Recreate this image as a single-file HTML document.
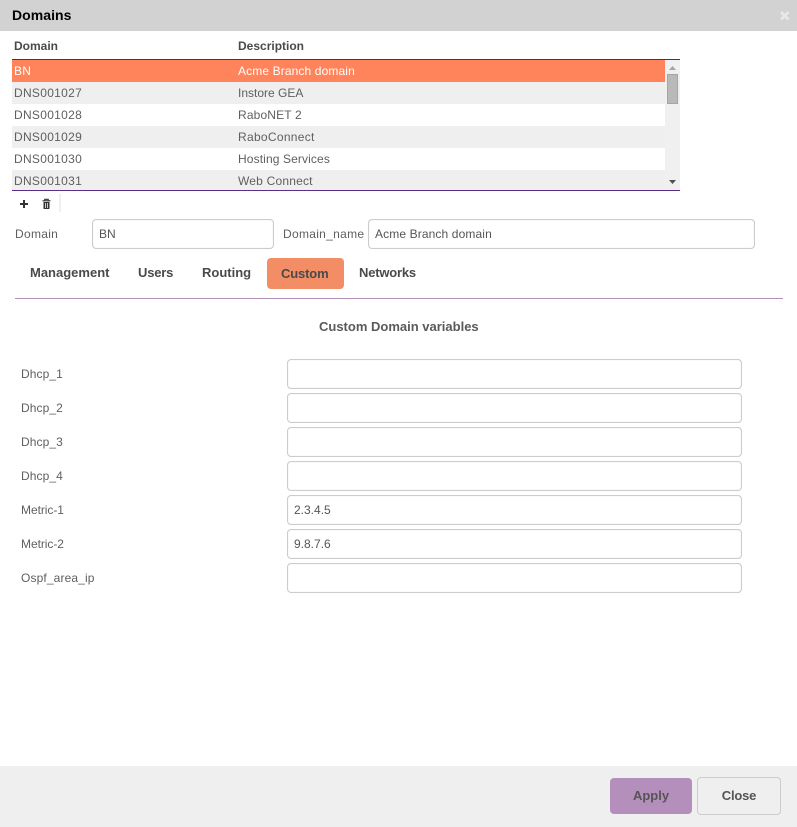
<!DOCTYPE html>
<html><head><meta charset="utf-8">
<style>
html,body{margin:0;padding:0;background:#fff}
body{width:797px;height:827px;position:relative;overflow:hidden;font-family:"Liberation Sans",sans-serif;font-size:12px;color:#5f5f5f}
.a{position:absolute;white-space:nowrap}
.t{position:absolute;white-space:nowrap;line-height:16px;letter-spacing:.3px}
.b{font-weight:bold;letter-spacing:0}
.r{position:absolute;left:12px;width:653px}
.i{position:absolute;box-sizing:border-box;height:30px;background:#fff;border:1px solid #ccc;border-radius:4px;color:#555;line-height:28px;padding-left:6px;letter-spacing:0;box-shadow:inset 0 0 1px #ddd}
.tab{position:absolute;font-weight:bold;font-size:13px;line-height:16px;color:#4a4a4a;white-space:nowrap}
.s{letter-spacing:.12px}
</style></head>
<body>
<div class="a" style="left:0;top:0;width:797px;height:31px;background:#d2d2d2"></div>
<div class="t b" style="left:12px;top:7px;font-size:14px;color:#000;letter-spacing:.05px">Domains</div>
<svg class="a" style="left:779px;top:10px" width="11" height="11" viewBox="0 0 11 11"><path d="M2 2L9.500 9.500M9.500 2L2 9.500" stroke="#ebe6ee" stroke-width="2.800"/></svg>

<div class="t b" style="left:14px;top:38px;color:#4a4a4a">Domain</div>
<div class="t b" style="left:238px;top:38px;color:#4a4a4a">Description</div>

<div class="a" style="left:12px;top:59px;width:668px;height:1px;background:#4b2a78"></div>
<div class="a" style="left:665px;top:60px;width:15px;height:130px;background:#f0f0f0"></div>
<div class="r" style="top:60px;height:22px;background:#ff845c"></div>
<div class="r" style="top:82px;height:22px;background:#efefef"></div>
<div class="r" style="top:126px;height:22px;background:#efefef"></div>
<div class="r" style="top:170px;height:20px;background:#efefef"></div>
<div class="a" style="left:12px;top:190px;width:668px;height:1px;background:#5b2d86"></div>
<div class="a" style="left:667px;top:74px;width:11px;height:30px;box-sizing:border-box;background:#b9b9b9;border:1px solid #a5a5a5"></div>
<svg class="a" style="left:668px;top:65px" width="9" height="6"><path d="M1 5H8L4.500 1Z" fill="#a5a5a5"/></svg>
<svg class="a" style="left:668px;top:179px" width="9" height="6"><path d="M1 1H8L4.500 5Z" fill="#505050"/></svg>

<div class="t" style="left:14px;top:63px;color:#fff">BN</div><div class="t s" style="left:238px;top:63px;color:#fff">Acme Branch domain</div>
<div class="t" style="left:14px;top:85px">DNS001027</div><div class="t" style="left:238px;top:85px;letter-spacing:0">Instore GEA</div>
<div class="t" style="left:14px;top:107px">DNS001028</div><div class="t" style="left:238px;top:107px;letter-spacing:.15px">RaboNET 2</div>
<div class="t" style="left:14px;top:129px">DNS001029</div><div class="t" style="left:238px;top:129px">RaboConnect</div>
<div class="t" style="left:14px;top:151px">DNS001030</div><div class="t s" style="left:238px;top:151px">Hosting Services</div>
<div class="t" style="left:14px;top:173px">DNS001031</div><div class="t s" style="left:238px;top:173px;letter-spacing:.2px">Web Connect</div>

<svg class="a" style="left:19px;top:199px" width="10" height="10"><path d="M5 1V9M1 5H9" stroke="#333" stroke-width="2"/></svg>
<svg class="a" style="left:41px;top:198px" width="11" height="12"><path d="M1.500 2.800H9.500M3.800 2.800V1.300H7.200V2.800" stroke="#333" stroke-width="1.200" fill="none"/><path d="M2.500 4H8.500V10.500Q8.500 11 8 11H3Q2.500 11 2.500 10.500Z" fill="#333"/><path d="M4.500 5V10M6.500 5V10" stroke="#efefef" stroke-width=".8"/></svg>
<div class="a" style="left:59px;top:194px;width:2px;height:18px;background:#efefef"></div>

<div class="t" style="left:15px;top:226px">Domain</div>
<div class="i" style="left:92px;top:219px;width:182px">BN</div>
<div class="t" style="left:283px;top:226px">Domain_name</div>
<div class="i" style="left:368px;top:219px;width:387px;letter-spacing:.12px">Acme Branch domain</div>

<div class="tab" style="left:30px;top:265px">Management</div>
<div class="tab" style="left:138px;top:265px;letter-spacing:-.2px">Users</div>
<div class="tab" style="left:202px;top:265px">Routing</div>
<div class="a" style="left:267px;top:258px;width:77px;height:31px;background:#f28d65;border-radius:4px"></div>
<div class="tab" style="left:281px;top:266px;letter-spacing:-.15px">Custom</div>
<div class="tab" style="left:359px;top:265px;letter-spacing:-.2px">Networks</div>
<div class="a" style="left:15px;top:298px;width:768px;height:1px;background:#b28fb8"></div>

<div class="t b" style="left:319px;top:319px;color:#5a5a5a;font-size:13px">Custom Domain variables</div>

<div class="t" style="left:21px;top:366px;letter-spacing:.1px">Dhcp_1</div><div class="i" style="left:287px;top:359px;width:455px"></div>
<div class="t" style="left:21px;top:400px;letter-spacing:.1px">Dhcp_2</div><div class="i" style="left:287px;top:393px;width:455px"></div>
<div class="t" style="left:21px;top:434px;letter-spacing:.1px">Dhcp_3</div><div class="i" style="left:287px;top:427px;width:455px"></div>
<div class="t" style="left:21px;top:468px;letter-spacing:.1px">Dhcp_4</div><div class="i" style="left:287px;top:461px;width:455px"></div>
<div class="t" style="left:21px;top:502px;letter-spacing:-.05px">Metric-1</div><div class="i" style="left:287px;top:495px;width:455px">2.3.4.5</div>
<div class="t" style="left:21px;top:536px;letter-spacing:-.05px">Metric-2</div><div class="i" style="left:287px;top:529px;width:455px">9.8.7.6</div>
<div class="t" style="left:21px;top:570px;letter-spacing:.13px">Ospf_area_ip</div><div class="i" style="left:287px;top:563px;width:455px"></div>

<div class="a" style="left:0;top:766px;width:797px;height:61px;background:#efefef"></div>
<div class="a" style="left:610px;top:778px;width:82px;height:36px;background:#b48fbb;border-radius:4px;text-align:center;line-height:36px;font-weight:bold;font-size:13px;color:#555">Apply</div>
<div class="a" style="left:697px;top:777px;width:84px;height:38px;box-sizing:border-box;border:1px solid #ccc;border-radius:4px;text-align:center;line-height:36px;font-weight:bold;font-size:13px;color:#555;letter-spacing:-.2px">Close</div>
</body></html>
